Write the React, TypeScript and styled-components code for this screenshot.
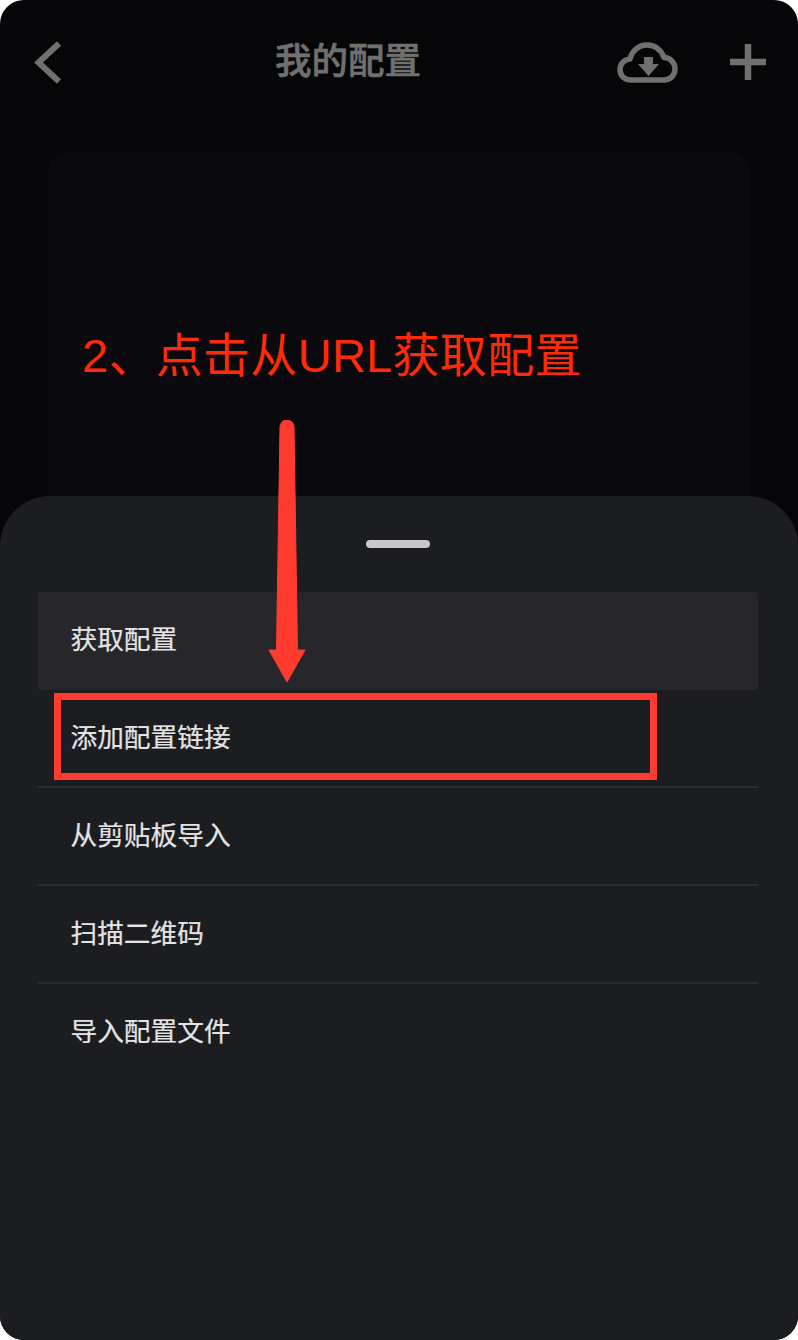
import React from "react";
import styled, { createGlobalStyle } from "styled-components";

const GlobalStyle = createGlobalStyle`
  html, body {
    margin: 0;
    padding: 0;
    background: #fff;
  }
`;

const MENU_ITEMS = ["获取配置", "添加配置链接", "从剪贴板导入", "扫描二维码", "导入配置文件"];

const App = () => (
  <>
    <GlobalStyle />
    <Screen>
      <Header>
        <BackIcon viewBox="0 0 29 43">
          <path d="M26 2.500 L5.500 21.500 L26 40.500" fill="none" stroke="#707070" strokeWidth="6" />
        </BackIcon>
        <Title>我的配置</Title>
        <Actions>
          <CloudIcon viewBox="0 0 61 41">
            <path
              d="M14 38 C7 38 3 33 3 27.500 C3 21.500 7.500 17.500 13 17 C15 8.500 22 3 30 3 C38.500 3 44.500 8.500 47 15.500 C53 15.500 58 20.500 58 27 C58 33 53.500 38 47 38 Z"
              fill="none"
              stroke="#707070"
              strokeWidth="5.500"
              strokeLinejoin="round"
            />
            <path d="M27 15 H36 V22 H42 L31.500 34 L21 22 H27 Z" fill="#707070" />
          </CloudIcon>
          <PlusIcon viewBox="0 0 36 36">
            <path d="M18 0 V36 M0 18 H36" stroke="#707070" strokeWidth="6.500" />
          </PlusIcon>
        </Actions>
      </Header>
      <Card />
      <Sheet>
        <Handle />
        <Menu>
          {MENU_ITEMS.map((item, index) => (
            <MenuItem key={item} $active={index === 0}>
              {item}
            </MenuItem>
          ))}
        </Menu>
      </Sheet>
      <Annotation>2、点击从URL获取配置</Annotation>
      <ArrowMark viewBox="0 0 38 264">
        <path
          d="M12 7 A7 7 0 0 1 26 7 L29.500 230 L37 230 L19 262 L1 230 L8.500 230 Z"
          fill="#ff3b30"
          stroke="#ff3b30"
          strokeWidth="1"
          strokeLinejoin="round"
        />
      </ArrowMark>
      <Highlight />
    </Screen>
  </>
);

const Screen = styled.div`
  position: relative;
  width: 798px;
  height: 1340px;
  overflow: hidden;
  border-radius: 24px;
  background: #060608;
  font-family: "Liberation Sans", "Noto Sans CJK SC", sans-serif;
`;

const Header = styled.header`
  display: flex;
  align-items: center;
  justify-content: space-between;
  height: 124px;
  padding: 0 32px 0 33px;
  box-sizing: border-box;
  position: relative;
`;

const BackIcon = styled.svg`
  width: 29px;
  height: 43px;
`;

const Title = styled.h1`
  position: absolute;
  left: 275px;
  top: 38px;
  margin: 0;
  font-size: 36.5px;
  line-height: 48px;
  font-weight: 500;
  -webkit-text-stroke: 0.6px #707070;
  color: #707070;
`;

const Actions = styled.div`
  display: flex;
  align-items: center;
  gap: 52px;
`;

const CloudIcon = styled.svg`
  width: 61px;
  height: 41px;
`;

const PlusIcon = styled.svg`
  width: 36px;
  height: 36px;
`;

const Card = styled.div`
  height: 500px;
  margin: 28px 48px 0;
  border-radius: 20px;
  background: #0a0a0e;
`;

const Sheet = styled.section`
  position: absolute;
  left: 0;
  right: 0;
  top: 496px;
  bottom: 0;
  display: flex;
  flex-direction: column;
  padding: 0 40px 0 38px;
  border-radius: 50px 50px 0 0;
  background: #1c1d21;
`;

const Handle = styled.div`
  align-self: center;
  flex: none;
  width: 64px;
  height: 8px;
  margin: 44px 0;
  border-radius: 4px;
  background: #c8c8cc;
`;

const Menu = styled.ul`
  margin: 0;
  padding: 0;
  list-style: none;
`;

const MenuItem = styled.li<{ $active?: boolean }>`
  display: flex;
  align-items: center;
  box-sizing: border-box;
  height: 98px;
  padding: 0 32px 6px 32.500px;
  font-size: 26.7px;
  -webkit-text-stroke: 0.2px #e4e4e6;
  color: #e4e4e6;
  border-radius: ${(p) => (p.$active ? "3px" : "0")};
  background: ${(p) => (p.$active ? "#27272b" : "transparent")};
  border-bottom: 2px solid ${(p) => (p.$active ? "transparent" : "#2a2b2f")};

  &:last-child {
    border-bottom-color: transparent;
  }
`;

const Annotation = styled.div`
  position: absolute;
  left: 82px;
  top: 324px;
  font-size: 47px;
  letter-spacing: 0.3px;
  line-height: 64px;
  white-space: nowrap;
  color: #ff2a0a;
`;

const ArrowMark = styled.svg`
  position: absolute;
  left: 268px;
  top: 420px;
  width: 38px;
  height: 264px;
`;

const Highlight = styled.div`
  position: absolute;
  left: 54px;
  top: 693px;
  width: 603px;
  height: 87px;
  box-sizing: border-box;
  border: 7px solid #ff3b30;
`;

export default App;
